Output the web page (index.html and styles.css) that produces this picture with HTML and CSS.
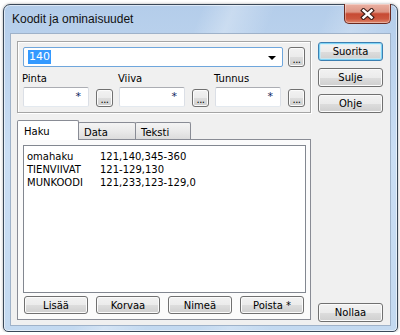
FILE: index.html
```html
<!DOCTYPE html>
<html>
<head>
	<meta charset="utf-8">
	<title>Koodit ja ominaisuudet</title>
	<link rel="stylesheet" href="styles.css">
</head>
<body>
	<div class=window>
		<div class=titlebar>
			<span class=title>Koodit ja ominaisuudet</span>
			<button type=button class=close>
				<svg width="15" height="12" viewBox="0 0 15 12">
					<path d="M3.5 2.5 L11.5 9.5 M11.5 2.5 L3.5 9.5" stroke="#3b1c17" stroke-width="4.6" stroke-linecap="square" fill="none"/>
					<path d="M3.5 2.5 L11.5 9.5 M11.5 2.5 L3.5 9.5" stroke="#fff" stroke-width="2.4" stroke-linecap="square" fill="none"/>
				</svg>
			</button>
		</div>
		<div class=client>
			<div class=main>
				<div class=group>
					<div class=combo-row>
						<div class=combo>
							<span class=sel>140</span>
							<span class=arrow></span>
						</div>
						<button type=button class="btn dots">...</button>
					</div>
					<div class=fields>
						<div class=field>
							<label>Pinta</label>
							<div class=field-row>
								<div class=edit>*</div>
								<button type=button class="btn dots">...</button>
							</div>
						</div>
						<div class=field>
							<label>Viiva</label>
							<div class=field-row>
								<div class=edit>*</div>
								<button type=button class="btn dots">...</button>
							</div>
						</div>
						<div class=field>
							<label>Tunnus</label>
							<div class=field-row>
								<div class=edit>*</div>
								<button type=button class="btn dots">...</button>
							</div>
						</div>
					</div>
				</div>
				<div class=tabs>
					<div class="tab active">Haku</div>
					<div class=tab>Data</div>
					<div class="tab last">Teksti</div>
				</div>
				<div class=panel>
					<div class=list>
						<span>omahaku</span><span>121,140,345-360</span>
						<span>TIENVIIVAT</span><span>121-129,130</span>
						<span>MUNKOODI</span><span>121,233,123-129,0</span>
					</div>
					<div class=panel-buttons>
						<button type=button class=btn>Lisää</button>
						<button type=button class=btn>Korvaa</button>
						<button type=button class=btn>Nimeä</button>
						<button type=button class=btn>Poista *</button>
					</div>
				</div>
			</div>
			<div class=side>
				<button type=button class="btn default">Suorita</button>
				<button type=button class=btn>Sulje</button>
				<button type=button class=btn>Ohje</button>
				<button type=button class="btn reset">Nollaa</button>
			</div>
		</div>
	</div>
</body>
</html>
```

FILE: styles.css
```css
* {
	box-sizing: border-box;
}
body {
	margin: 0;
	background: #fff;
	font-family: "DejaVu Sans", Verdana, sans-serif;
	font-size: 10px;
	color: #000;
}
.window {
	width: 395px;
	height: 328px;
	margin: 4px 0 0 3px;
	border: 1px solid #3a4858;
	border-radius: 7px 7px 5px 5px;
	background:
		linear-gradient(112deg, transparent 38%, rgba(255,255,255,0.28) 44%, transparent 52%, transparent 62%, rgba(255,255,255,0.2) 68%, transparent 76%),
		linear-gradient(180deg, #b4cdea 0%, #cadef4 45%, #c3d9f0 100%);
	box-shadow: inset 0 0 0 1px rgba(255,255,255,0.55), 0 0 3px rgba(0,0,0,0.35);
}
.titlebar {
	display: flex;
	align-items: flex-start;
	height: 28px;
}
.title {
	font-family: "Liberation Sans", Arial, sans-serif;
	font-size: 12px;
	line-height: 14px;
	padding: 7px 0 0 8px;
	color: #111;
}
.close {
	margin: -1px 6px 0 auto;
	width: 47px;
	height: 20px;
	padding: 0;
	border: 1px solid #6b2a20;
	border-top: none;
	border-radius: 0 0 5px 5px;
	background: linear-gradient(180deg, #ebb1a3 0%, #dd9584 42%, #c74a33 52%, #cc563e 78%, #e08a6f 100%);
	box-shadow: inset 0 0 0 1px rgba(255,255,255,0.35);
	display: flex;
	align-items: center;
	justify-content: center;
}
.close svg {
	display: block;
}
.client {
	display: flex;
	height: 293px;
	margin: 0 6px;
	border: 1px solid #9fb2c9;
	background: #f0f0f0;
	padding: 7px 7px 5px 6px;
	gap: 7px;
}
.main {
	width: 294px;
	display: flex;
	flex-direction: column;
}
.group {
	height: 72px;
	border: 1px solid #a5a5a5;
	box-shadow: inset 1px 1px 0 #fff, 1px 1px 0 #fff;
	padding: 5px 5px 0 5px;
}
.combo-row {
	display: flex;
	gap: 5px;
}
.combo {
	width: 260px;
	height: 20px;
	border: 1px solid #6fa6dc;
	border-radius: 2px;
	background: #fff;
	display: flex;
	align-items: center;
	padding: 0 6px 0 4px;
}
.sel {
	background: #3399ff;
	color: #fff;
	line-height: 14px;
	padding: 0 1px;
	font-size: 11px;
}
.arrow {
	margin-left: auto;
	width: 0;
	height: 0;
	border-left: 4px solid transparent;
	border-right: 4px solid transparent;
	border-top: 4px solid #000;
	margin-top: 2px;
}
.fields {
	display: flex;
	gap: 6px;
}
.field label {
	display: block;
	margin: 5px 0 2px -1px;
	line-height: 13px;
}
.field-row {
	display: flex;
	align-items: flex-end;
	gap: 7px;
}
.edit {
	width: 66px;
	height: 20px;
	background: #fff;
	border: 1px solid #dbdfe6;
	border-top-color: #abadb3;
	border-bottom-color: #e3e9ef;
	border-radius: 2px;
	text-align: right;
	padding: 2px 7px 0 0;
	color: #10265e;
	font-size: 11px;
	line-height: 14px;
}
.btn {
	font-family: inherit;
	font-size: 10px;
	color: #000;
	padding: 0;
	border: 1px solid #707070;
	border-radius: 3px;
	background: linear-gradient(180deg, #f2f2f2 0%, #ebebeb 50%, #dddddd 51%, #cfcfcf 100%);
	box-shadow: inset 0 0 0 1px #fbfbfb;
	height: 19px;
}
.dots {
	width: 17px;
	height: 20px;
	line-height: 10px;
	padding-top: 6px;
	letter-spacing: -0.5px;
}
.field-row .dots {
	height: 18px;
	padding-top: 4px;
}
.tabs {
	display: flex;
	align-items: flex-end;
	margin-top: 7px;
	height: 19px;
	position: relative;
	z-index: 1;
}
.tab {
	height: 17px;
	border: 1px solid #898c95;
	border-bottom: none;
	border-radius: 2px 2px 0 0;
	background: linear-gradient(180deg, #f4f4f4 0%, #eaeaea 50%, #dcdcdc 100%);
	padding: 3px 0 0 5px;
	line-height: 13px;
	width: 58px;
	margin-left: -1px;
}
.tab.active {
	width: 62px;
	height: 20px;
	margin: 0 0 -1px 0;
	background: #fff;
	padding: 4px 0 0 6px;
}
.tab.last {
	width: 56px;
}
.panel {
	height: 181px;
	border: 1px solid #898c95;
	background: #fbfbfb;
	padding: 5px 4px 5px 5px;
}
.list {
	height: 148px;
	border: 1px solid #828790;
	background: #fff;
	display: grid;
	grid-template-columns: 73px auto;
	align-content: start;
	padding: 4px 0 0 3px;
	line-height: 13px;
}
.panel-buttons {
	display: flex;
	gap: 8px;
	margin: 3px 0 0 1px;
}
.panel-buttons .btn {
	width: 64px;
	height: 18px;
}
.side {
	width: 65px;
	display: flex;
	flex-direction: column;
	gap: 7px;
	padding-top: 1px;
}
.side .btn {
	width: 65px;
}
.default {
	border-color: #3c7fb1;
	box-shadow: inset 0 0 0 1px #7fd4f6, inset 0 0 0 2px rgba(200,238,252,0.6);
}
.reset {
	margin-top: auto;
	margin-bottom: -2px;
}
```
